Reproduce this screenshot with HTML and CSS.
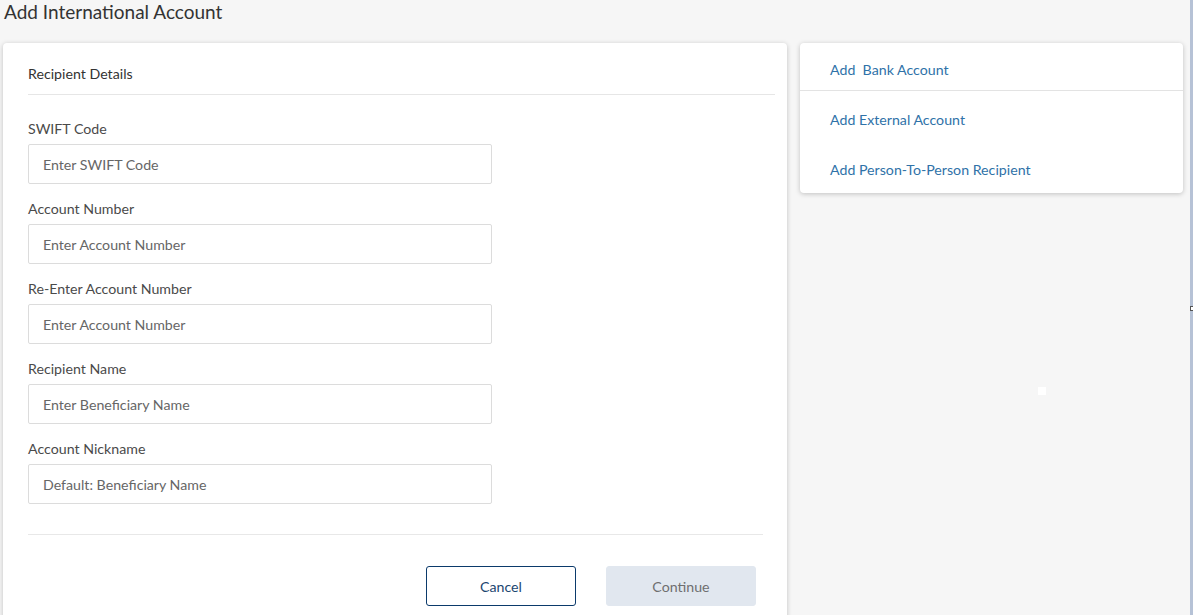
FILE: index.html
```html
<!DOCTYPE html>
<html>
<head>
<meta charset="utf-8">
<link rel="stylesheet" href="styles.css">
</head>
<body>
<div class="page">
  <div class="content">
    <h1 class="title">Add International Account</h1>
    <div class="columns">
      <section class="card form-card">
        <div class="card-header">Recipient Details</div>
        <div class="form">
          <div class="field">
            <label class="label">SWIFT Code</label>
            <div class="input">Enter SWIFT Code</div>
          </div>
          <div class="field">
            <label class="label">Account Number</label>
            <div class="input">Enter Account Number</div>
          </div>
          <div class="field">
            <label class="label">Re-Enter Account Number</label>
            <div class="input">Enter Account Number</div>
          </div>
          <div class="field">
            <label class="label">Recipient Name</label>
            <div class="input">Enter Beneficiary Name</div>
          </div>
          <div class="field">
            <label class="label">Account Nickname</label>
            <div class="input">Default: Beneficiary Name</div>
          </div>
        </div>
        <div class="footer">
          <button class="btn btn-cancel">Cancel</button>
          <button class="btn btn-continue">Continue</button>
        </div>
      </section>
      <aside class="card side-card">
        <a class="side-link first">Add&nbsp; Bank Account</a>
        <a class="side-link">Add External Account</a>
        <a class="side-link">Add Person-To-Person Recipient</a>
      </aside>
    </div>
    <span class="dot"></span>
  </div>
  <div class="strip"><span class="strip-mark"></span></div>
</div>
</body>
</html>
```
FILE: styles.css
```css
* { box-sizing: border-box; }
html, body { margin: 0; padding: 0; }
body {
  background: #f6f6f6;
  font-family: "Lato", "Open Sans", sans-serif;
  color: #333;
  height: 615px;
  overflow: hidden;
}
.page {
  display: flex;
  height: 615px;
}
.content {
  flex: 1;
  position: relative;
}
.strip {
  width: 3px;
  background: #b6c2d6;
  position: relative;
}
.strip-mark {
  position: absolute;
  left: 0;
  top: 306px;
  width: 4px;
  height: 5px;
  border: 1px solid #555;
  background: #fff;
}
.title {
  margin: 0;
  padding: 0 0 0 4px;
  font-size: 19px;
  line-height: 23px;
  font-weight: 400;
  color: #333;
  height: 43px;
}
.columns {
  display: flex;
  gap: 13px;
  padding-left: 3px;
  align-items: flex-start;
}
.card {
  background: #fff;
  border-radius: 4px;
  box-shadow: 0 1px 5px rgba(0, 0, 0, 0.22);
}
.form-card {
  width: 784px;
  height: 600px;
  padding-left: 25px;
}
.card-header {
  font-size: 14.2px;
  line-height: 20px;
  padding: 21px 0 10px;
  margin-right: 12px;
  border-bottom: 1px solid #e6e6e6;
  color: #333;
}
.form {
  padding-top: 24px;
  display: flex;
  flex-direction: column;
  gap: 15px;
}
.field {
  display: flex;
  flex-direction: column;
  gap: 5px;
}
.label {
  font-size: 14.2px;
  line-height: 19px;
  color: #4a4a4a;
}
.input {
  width: 464px;
  height: 40px;
  margin-top: 1px;
  border: 1px solid #dcdcdc;
  border-radius: 2px;
  padding: 0 14px;
  display: flex;
  align-items: center;
  font-size: 14.2px;
  color: #666;
}
.footer {
  margin-top: 30px;
  margin-right: 24px;
  border-top: 1px solid #e8e8e8;
  padding-top: 31px;
  padding-right: 7px;
  display: flex;
  justify-content: flex-end;
  gap: 30px;
}
.btn {
  width: 150px;
  height: 40px;
  border-radius: 3px;
  font-family: inherit;
  font-size: 14.2px;
  padding: 0;
}
.btn-cancel {
  background: #fff;
  border: 1px solid #0b3a6b;
  color: #1c4670;
}
.btn-continue {
  background: #e1e7ef;
  border: 1px solid #e1e7ef;
  color: #6f6f6f;
}
.side-card {
  width: 383px;
  padding-bottom: 2px;
  display: flex;
  flex-direction: column;
}
.side-link {
  display: block;
  font-size: 14.2px;
  line-height: 20px;
  color: #2f72a8;
  padding: 19px 30px 11px;
}
.side-link.first {
  padding-top: 17px;
  padding-bottom: 10px;
  border-bottom: 1px solid #e3e3e3;
}
.dot {
  position: absolute;
  left: 1038px;
  top: 387px;
  width: 8px;
  height: 8px;
  background: #fff;
}
```
